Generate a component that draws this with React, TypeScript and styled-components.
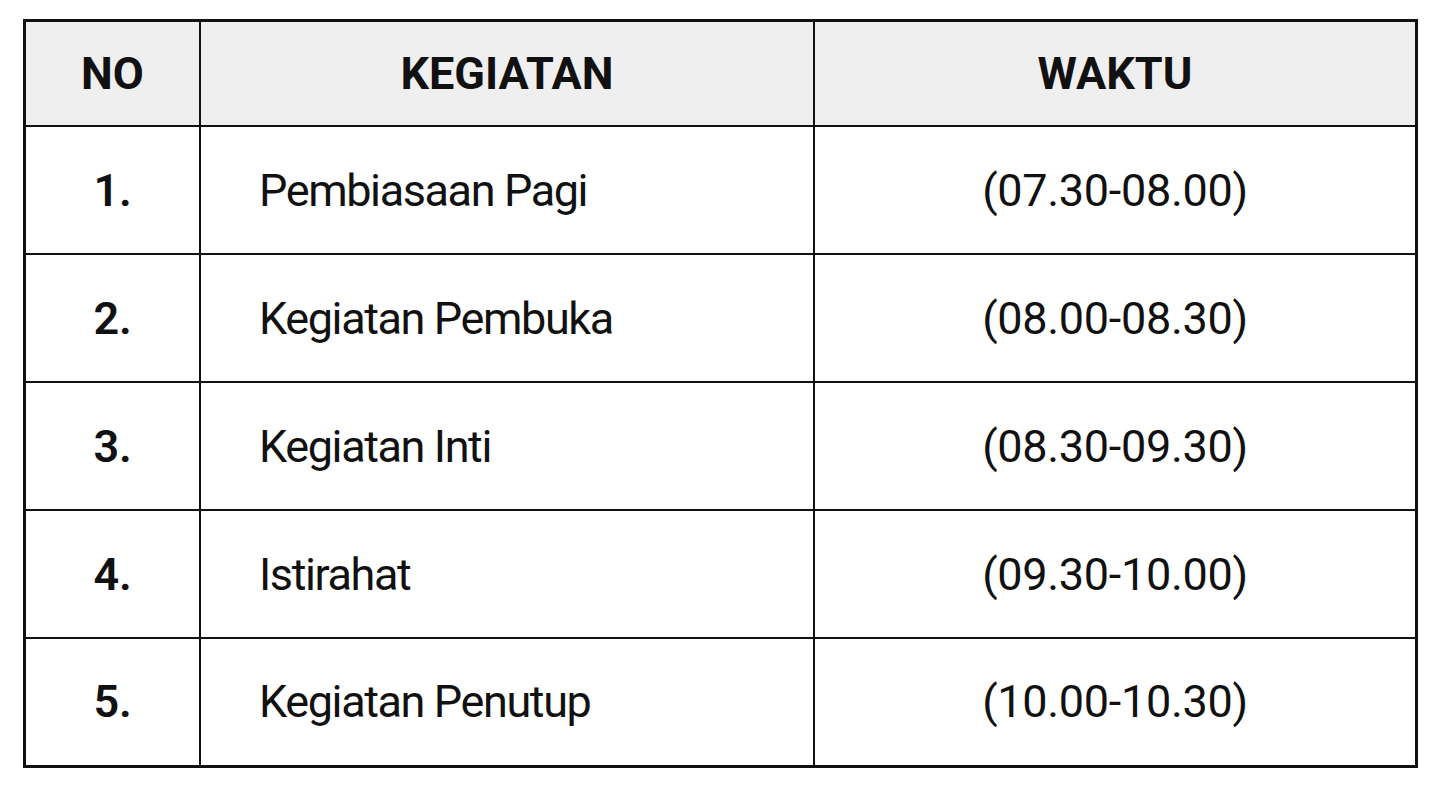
import React, { FC } from 'react';
import styled, { createGlobalStyle } from 'styled-components';

type Activity = {
  no: string,
  name: string,
  time: string,
};

const activities: Array<Activity> = [
  { no: '1.', name: 'Pembiasaan Pagi', time: '(07.30-08.00)' },
  { no: '2.', name: 'Kegiatan Pembuka', time: '(08.00-08.30)' },
  { no: '3.', name: 'Kegiatan Inti', time: '(08.30-09.30)' },
  { no: '4.', name: 'Istirahat', time: '(09.30-10.00)' },
  { no: '5.', name: 'Kegiatan Penutup', time: '(10.00-10.30)' },
];

const GlobalStyle = createGlobalStyle`
  html, body {
    margin: 0;
    padding: 0;
    background: #ffffff;
  }

  body {
    font-family: Roboto, "Liberation Sans", sans-serif;
    color: #111111;
  }
`;

const Page = styled.div`
  padding: 19px 0 0 23px;
`;

const Table = styled.table`
  width: 1395px;
  border-collapse: collapse;
  border: 3px solid #111111;
  table-layout: fixed;
`;

const HeadCell = styled.th<{ $width?: number }>`
  width: ${(p) => (p.$width ? `${p.$width}px` : 'auto')};
  height: 103px;
  background: #efefef;
  border: 2.5px solid #111111;
  font-size: 45px;
  font-weight: 700;
  text-align: center;
  vertical-align: middle;
  padding: 0;
`;

const Row = styled.tr`
  height: 128px;
`;

const Cell = styled.td<{ $align?: 'left' | 'center', $bold?: boolean, $tight?: boolean }>`
  border: 2.5px solid #111111;
  font-size: 45px;
  font-weight: ${(p) => (p.$bold ? 600 : 400)};
  letter-spacing: ${(p) => (p.$tight ? '-1.4px' : '-0.3px')};
  text-align: ${(p) => p.$align ?? 'center'};
  padding: ${(p) => (p.$align === 'left' ? '0 0 0 58px' : '0')};
  vertical-align: middle;
`;

const ScheduleRow: FC<Activity> = (props) => {
  return (
    <Row>
      <Cell $bold>{props.no}</Cell>
      <Cell $align="left" $tight>{props.name}</Cell>
      <Cell>{props.time}</Cell>
    </Row>
  );
};

const App: FC = () => {
  return (
    <Page>
      <GlobalStyle/>
      <Table>
        <thead>
          <tr>
            <HeadCell $width={173}>NO</HeadCell>
            <HeadCell $width={612}>KEGIATAN</HeadCell>
            <HeadCell>WAKTU</HeadCell>
          </tr>
        </thead>
        <tbody>
          {activities.map((o, i) => {
            return <ScheduleRow key={i} no={o.no} name={o.name} time={o.time}/>;
          })}
        </tbody>
      </Table>
    </Page>
  );
};

export default App;
